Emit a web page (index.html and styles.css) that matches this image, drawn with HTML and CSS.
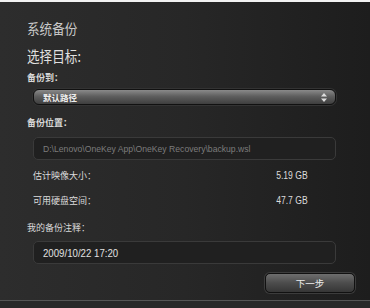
FILE: index.html
```html
<!DOCTYPE html>
<html>
<head>
<meta charset="utf-8">
<link rel="stylesheet" href="styles.css">
</head>
<body>
<div class="window">
  <div class="title"><span class="sq">系统备份</span></div>
  <div class="heading"><span class="sq">选择目标:</span></div>
  <div class="label">备份到：</div>
  <div class="select">
    <span>默认路径</span>
    <svg class="arrows" width="6" height="9" viewBox="0 0 6 9"><path d="M3 0 L6 3.5 H0 Z M3 9 L6 5.5 H0 Z" fill="#ddd"/></svg>
  </div>
  <div class="label l2">备份位置：</div>
  <div class="field path"><span class="sq">D:\Lenovo\OneKey App\OneKey Recovery\backup.wsl</span></div>
  <div class="row r1"><span>估计映像大小：</span><span class="num">5.19 GB</span></div>
  <div class="row r2"><span>可用硬盘空间：</span><span class="num">47.7 GB</span></div>
  <div class="label l3">我的备份注释：</div>
  <div class="field note"><span class="sq">2009/10/22 17:20</span></div>
  <div class="actions"><div class="btn">下一步</div></div>
</div>
</body>
</html>
```
FILE: styles.css
```css
html, body { margin: 0; padding: 0; }
body {
  width: 370px; height: 308px; overflow: hidden;
  background: #1e1e1e;
  font-family: "Noto Sans CJK SC", "Liberation Sans", sans-serif;
}
.window {
  box-sizing: border-box;
  width: 370px; height: 308px;
  border-top: 2px solid #f2f2f2;
  border-bottom: 7px solid #282828;
  box-shadow: inset 0 -1px 0 #555;
  background: linear-gradient(90deg, #2d2d2d 0%, #272727 50%, #1d1d1d 100%);
  padding: 16px 34px 0 27px;
  display: flex; flex-direction: column;
  color: #dcdcdc;
}
.sq { display: inline-block; transform: scaleX(0.84); transform-origin: left center; white-space: nowrap; }
.title { font-size: 14px; line-height: 20px; color: #c8c8c8; }
.title .sq { transform: scaleX(0.9); }
.heading { font-size: 15px; line-height: 22px; margin-top: 7px; color: #e0e0e0; }
.label { font-size: 9px; line-height: 14px; font-weight: bold; color: #d8d8d8; margin-top: 4px; }
.select {
  margin: 4px 0 0 6px; height: 16px; box-sizing: border-box;
  border-radius: 6px;
  border: 1px solid #111;
  background: linear-gradient(180deg, #8a8a8a 0%, #5e5e5e 45%, #3e3e3e 100%);
  display: flex; align-items: center; justify-content: space-between;
  padding: 0 8px 0 9px;
  font-size: 8.5px; font-weight: bold; color: #eee;
  box-shadow: 0 0 0 1px #333;
}
.l2 { margin-top: 11px; }
.field {
  margin: 7px 0 0 6px; height: 23px; box-sizing: border-box;
  border-radius: 5px;
  border: 1px solid #3a3a3a;
  background: #202020;
  display: flex; align-items: center; padding: 0 9px;
  font-family: "Liberation Sans", sans-serif;
}
.path { font-size: 9.8px; color: #7c7c7c; }
.path .sq { transform: scaleX(0.88); }
.row {
  display: flex; justify-content: space-between;
  margin-left: 6px; margin-right: 28px;
  font-size: 9px; line-height: 14px; color: #dcdcdc;
}
.num { display: inline-block; font-family: "Liberation Sans", sans-serif; font-size: 10px; transform: scaleX(0.86); transform-origin: right center; }
.r1 { margin-top: 9px; }
.r2 { margin-top: 11px; }
.l3 { margin-top: 13px; font-weight: normal; }
.note { font-size: 10.5px; color: #e0e0e0; margin-top: 6px; }
.note .sq { transform: scaleX(0.92); }
.actions { display: flex; justify-content: flex-end; margin-right: -19px; margin-top: 9px; }
.btn {
  width: 90px; height: 20px; box-sizing: border-box;
  border-radius: 5px; border: 1px solid #111;
  background: linear-gradient(180deg, #6e6e6e 0%, #4c4c4c 50%, #363636 100%);
  box-shadow: 0 0 0 1px #3c3c3c;
  font-size: 9.5px; color: #eee; text-align: center; line-height: 18px;
}
```
